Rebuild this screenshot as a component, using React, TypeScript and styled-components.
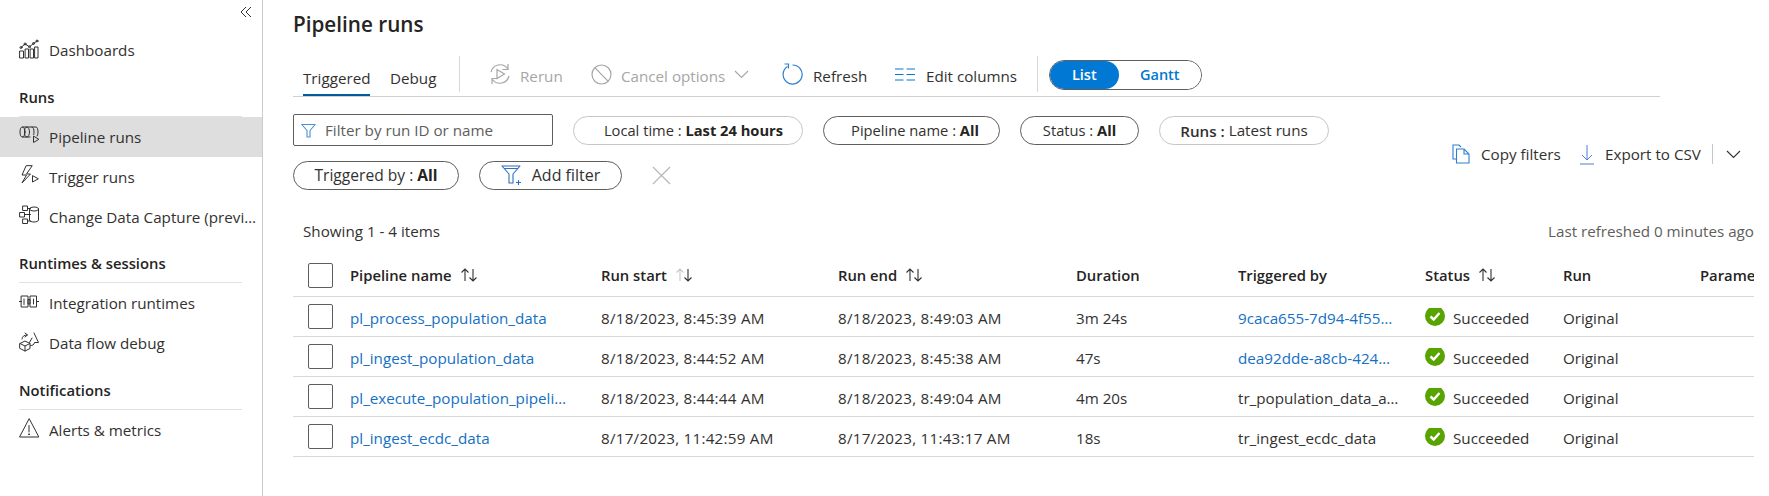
import React from "react";
import styled, { createGlobalStyle } from "styled-components";

const Global = createGlobalStyle`
  html, body { margin: 0; padding: 0; background: #fff; }
  body { font-family: "Open Sans", "Noto Sans", "Liberation Sans", sans-serif; font-size: 15.2px; color: #323130; height: 496px; overflow: hidden; }
`;

const Page = styled.div`
  display: flex;
  width: 1769px;
  height: 496px;
  overflow: hidden;
`;

const Sidebar = styled.nav`
  width: 263px;
  flex: none;
  box-sizing: border-box;
  border-right: 1.5px solid #ccc;
  display: flex;
  flex-direction: column;
`;

const CollapseRow = styled.div`
  height: 30px;
  display: flex;
  justify-content: flex-end;
  align-items: center;
  padding: 0 10px 6px 0;
  box-sizing: border-box;
`;

const NavItem = styled.div<{ $active?: boolean }>`
  height: 40px;
  display: flex;
  align-items: center;
  gap: 10px;
  padding-left: 19px;
  background: ${(p) => (p.$active ? "#dedede" : "transparent")};
  color: #323130;
  white-space: nowrap;
  overflow: hidden;
  svg { flex: none; margin-top: -3px; }
`;

const NavLabel = styled.span`
  overflow: hidden;
  text-overflow: ellipsis;
  padding-right: 2px;
`;

const NavHeading = styled.div`
  height: 46.5px;
  box-sizing: border-box;
  margin: 0 20px 0 19px;
  display: flex;
  align-items: flex-end;
  padding-bottom: 9px;
  border-bottom: 1px solid #e1e1e1;
  font-weight: 600;
  font-size: 14.8px;
  line-height: 20px;
  color: #252423;
`;

const Main = styled.main`
  flex: 1;
  min-width: 0;
  padding: 0 15px 0 30px;
`;

const Title = styled.h1`
  margin: 0;
  height: 50px;
  line-height: 48px;
  font-size: 20.7px;
  font-weight: 600;
  color: #252423;
`;

const Toolbar = styled.div`
  width: 1367px;
  height: 47px;
  box-sizing: border-box;
  border-bottom: 1.5px solid #d2d0ce;
  display: flex;
  align-items: stretch;
  padding-left: 10px;
`;

const Tab = styled.div<{ $active?: boolean; $w: number }>`
  width: ${(p) => p.$w}px;
  flex: none;
  margin-right: 20px;
  height: 46px;
  box-sizing: border-box;
  padding-top: 17px;
  line-height: 22px;
  border-bottom: 2px solid ${(p) => (p.$active ? "#005a9e" : "transparent")};
  white-space: nowrap;
`;

const ToolDivider = styled.div<{ $mr: number }>`
  width: 1px;
  height: 36px;
  margin: 6px ${(p) => p.$mr}px 0 0;
  background: #d8d8d8;
  flex: none;
`;

const ToolButton = styled.div<{ $disabled?: boolean; $w: number; $gap?: number }>`
  width: ${(p) => p.$w}px;
  flex: none;
  display: flex;
  align-items: center;
  gap: ${(p) => p.$gap ?? 9}px;
  height: 32px;
  margin-top: 10px;
  color: ${(p) => (p.$disabled ? "#a6a6a6" : "#323130")};
  white-space: nowrap;
  svg { margin-top: -4px; flex: none; }
`;

const Toggle = styled.div`
  width: 153px;
  height: 30px;
  margin-top: 10px;
  box-sizing: border-box;
  border: 1px solid #605e5c;
  border-radius: 15px;
  display: flex;
  flex: none;
  overflow: hidden;
  font-weight: 600;
  font-size: 14.5px;
`;

const ToggleOption = styled.div<{ $on?: boolean }>`
  width: ${(p) => (p.$on ? "69px" : "83px")};
  display: flex;
  align-items: center;
  justify-content: center;
  border-radius: 15px;
  background: ${(p) => (p.$on ? "#0078d4" : "#fff")};
  color: ${(p) => (p.$on ? "#fff" : "#0078d4")};
  padding-bottom: 1px;
`;

const FilterArea = styled.div`
  display: flex;
  align-items: flex-start;
  height: 122px;
  padding-top: 17px;
  box-sizing: border-box;
`;

const FilterWrap = styled.div`
  width: 1060px;
  display: flex;
  flex-wrap: wrap;
  align-items: center;
  column-gap: 20px;
  row-gap: 15px;
`;

const SearchBox = styled.div`
  width: 260px;
  height: 32px;
  box-sizing: border-box;
  border: 1px solid #605e5c;
  border-radius: 2px;
  display: flex;
  align-items: center;
  gap: 9px;
  padding-left: 7px;
  color: #605e5c;
`;

const Pill = styled.div<{ $w: number; $muted?: boolean; $fs?: number; $pl?: number }>`
  width: ${(p) => p.$w}px;
  height: 29px;
  box-sizing: border-box;
  border: 1px solid ${(p) => (p.$muted ? "#c8c6c4" : "#605e5c")};
  border-radius: 15px;
  display: flex;
  align-items: center;
  justify-content: center;
  gap: 4px;
  white-space: pre;
  padding: 0 0 1px ${(p) => p.$pl ?? 0}px;
  font-size: ${(p) => p.$fs ?? 14.7}px;
  b { font-weight: 700; color: #252423; }
`;

const RunsKey = styled.span`
  font-weight: 600;
  margin-top: 2px;
`;

const AddFilter = styled(Pill)`
  gap: 9px;
`;

const ClearButton = styled.div`
  margin-left: 10px;
  height: 29px;
  display: flex;
  align-items: center;
`;

const SideActions = styled.div`
  margin-left: auto;
  margin-top: 28px;
  display: flex;
  align-items: center;
  height: 24px;
  padding-right: 13px;
  white-space: nowrap;
`;

const SideAction = styled.div<{ $w: number }>`
  width: ${(p) => p.$w}px;
  flex: none;
  display: flex;
  align-items: center;
  gap: 11px;
`;

const SideDivider = styled.div`
  width: 1px;
  height: 20px;
  background: #c8c6c4;
  margin: 0 13px 0 11px;
`;

const ListMeta = styled.div`
  height: 24px;
  display: flex;
  justify-content: space-between;
  align-items: center;
  padding-left: 10px;
`;

const MetaMuted = styled.span`
  color: #605e5c;
`;

const Table = styled.div`
  margin-top: 6px;
  overflow: hidden;
`;

const Row = styled.div<{ $head?: boolean }>`
  display: grid;
  grid-template-columns: 57px 251px 237px 238px 162px 187px 138px 137px 54px;
  height: ${(p) => (p.$head ? "48px" : "40px")};
  padding-top: ${(p) => (p.$head ? "5px" : "2px")};
  box-sizing: border-box;
  border-bottom: 1.5px solid #d8d8d8;
  align-items: center;
  font-weight: ${(p) => (p.$head ? 600 : 400)};
  color: ${(p) => (p.$head ? "#252423" : "#323130")};
  font-size: ${(p) => (p.$head ? "14.8px" : "15.2px")};
`;

const Cell = styled.div`
  min-width: 0;
  white-space: nowrap;
  overflow: hidden;
  text-overflow: ellipsis;
  display: flex;
  align-items: center;
  gap: 8px;
`;

const DateCell = styled(Cell)`
  letter-spacing: 0.25px;
`;

const StatusCell = styled(Cell)`
  svg { margin-top: -4px; flex: none; }
`;

const ClippedCell = styled(Cell)`
  text-overflow: clip;
`;

const Truncated = styled.span<{ $link?: boolean; $w?: number }>`
  display: block;
  overflow: hidden;
  text-overflow: ellipsis;
  max-width: ${(p) => (p.$w ? `${p.$w}px` : "none")};
  color: ${(p) => (p.$link ? "#1570c4" : "inherit")};
`;

const CheckCell = styled.div<{ $body?: boolean }>`
  padding-left: 15px;
  display: flex;
  align-items: center;
  margin-top: ${(p) => (p.$body ? "-2px" : "0")};
`;

const Check = styled.div`
  width: 25px;
  height: 25px;
  box-sizing: border-box;
  border: 1px solid #605e5c;
  border-radius: 2px;
`;

const line = { fill: "none", stroke: "#323130", strokeWidth: 1, strokeLinecap: "round", strokeLinejoin: "round" } as const;

const DashIcon = () => (
  <svg width="20" height="20" viewBox="0 0 20 20" {...line}>
    <rect x="1" y="12" width="3.5" height="7" />
    <rect x="6.5" y="10" width="3" height="9" />
    <rect x="11.5" y="10" width="3" height="9" />
    <rect x="16" y="8" width="3" height="11" />
    <path d="M2 8.500 6 5l4.500 2.800 4-3.300L18 2" />
    <circle cx="2" cy="8.500" r="1" /><circle cx="6" cy="5" r="1" /><circle cx="10.500" cy="7.800" r="1" /><circle cx="14.500" cy="4.500" r="1" /><circle cx="18" cy="2" r="1" />
  </svg>
);
const PipeIcon = () => (
  <svg width="20" height="20" viewBox="0 0 20 20" {...line}>
    <ellipse cx="3.500" cy="7" rx="2.500" ry="5" />
    <ellipse cx="8" cy="7" rx="2.500" ry="5" />
    <path d="M3.500 2H17c1.200 0 2 2.200 2 5 0 1.600-.3 3-.8 4M3.500 12H11" />
    <path d="M13 2c1.200 0 2 2.200 2 5 0 1-.1 1.800-.3 2.600" />
    <path d="M14.500 11.500v6l5-3z" />
  </svg>
);
const TriggerIcon = () => (
  <svg width="20" height="20" viewBox="0 0 20 20" {...line}>
    <path d="M7 1 3 10h4.500L3 18l8.500-9H7.500L13 1z" />
    <path d="M13.500 11v6l5.500-3z" />
  </svg>
);
const CdcIcon = () => (
  <svg width="20" height="20" viewBox="0 0 20 20" {...line}>
    <rect x="4" y="1" width="4.500" height="4.500" />
    <rect x="1" y="7.500" width="4.500" height="4.500" />
    <rect x="4" y="14" width="4.500" height="4.500" />
    <path d="M8.500 3.500h3M5.500 9.500h6M8.500 16h3" />
    <ellipse cx="15" cy="4" rx="4.500" ry="2" />
    <path d="M10.500 4v11c0 1.200 2 2 4.500 2s4.500-.8 4.500-2V4" />
  </svg>
);
const RuntimeIcon = () => (
  <svg width="20" height="20" viewBox="0 0 20 20" {...line}>
    <path d="M0 9.500h2.500M17.500 9.500H20" />
    <path d="M2.500 4h6.500v8h2V4H17.500v11h-6.500V7.500H9v7.500H2.500z" />
    <path d="M5 7v5.500M14.500 7v5" />
  </svg>
);
const FlowIcon = () => (
  <svg width="20" height="20" viewBox="0 0 20 20" {...line}>
    <path d="M1 11.500 6 9l5 2.500v5L6 19l-5-2.500zM1 11.500 6 14l5-2.500M6 14v5" />
    <path d="M3 7c0-2.500 2-4 5-4M6 1l2.500 2L6 5" />
    <path d="M15 1l4.500 9.500h-4c-.5 2.500-2 3-4 3M13 6l-2.500 4.500" />
  </svg>
);
const AlertIcon = () => (
  <svg width="20" height="20" viewBox="0 0 20 20" {...line}>
    <path d="M10 1 .500 19h19z" />
    <path d="M10 7.500v6.500" />
    <circle cx="10" cy="16.300" r=".5" fill="#323130" />
  </svg>
);
const Chevrons = () => (
  <svg width="12" height="12" viewBox="0 0 12 12" fill="none" stroke="#323130" strokeWidth="1">
    <path d="M6 1 1 6l5 5M11 1 6 6l5 5" />
  </svg>
);
const RerunIcon = () => (
  <svg width="22" height="22" viewBox="0 0 22 22" fill="none" stroke="#a6a6a6" strokeWidth="1.200">
    <path d="M2 9A9.300 9.300 0 0 1 18.500 5.500M19 1v5.500h-5.500" />
    <path d="M20 13A9.300 9.300 0 0 1 3.500 16.500M3 21v-5.500h5.500" />
    <path d="M8 6.500v9l7.500-4.500z" />
  </svg>
);
const CancelIcon = () => (
  <svg width="21" height="21" viewBox="0 0 21 21" fill="none" stroke="#a6a6a6" strokeWidth="1.200">
    <circle cx="10.500" cy="10.500" r="9.500" />
    <path d="M4 3.800 17 17.200" />
  </svg>
);
const ChevronDown = ({ color = "#323130" }: { color?: string }) => (
  <svg width="15" height="9" viewBox="0 0 15 9" fill="none" stroke={color} strokeWidth="1.100">
    <path d="M1 1l6.500 6.500L14 1" />
  </svg>
);
const RefreshIcon = () => (
  <svg width="21" height="22" viewBox="0 0 21 22" fill="none" stroke="#2f7fd0" strokeWidth="1.200">
    <path d="M5.500 3.500a9.500 9.500 0 1 0 5-1.500" />
    <path d="M2.500 1h4v4.500" />
  </svg>
);
const ColumnsIcon = () => (
  <svg width="20" height="13" viewBox="0 0 20 13" fill="none" stroke="#0078d4" strokeWidth="1">
    <path d="M0 1h8.500M11.500 1H20M0 6.500h8.500M11.500 6.500H20M0 12h8.500M11.500 12H20" />
  </svg>
);
const FunnelIcon = () => (
  <svg width="15" height="15" viewBox="0 0 15 15" fill="none" stroke="#4a8ed6" strokeWidth="1.100" strokeLinejoin="round">
    <path d="M.8 1.500h13.400L9 7.500v6.500H6V7.500z" />
  </svg>
);
const AddFunnelIcon = () => (
  <svg width="22" height="22" viewBox="0 0 22 22" fill="none" stroke="#2f6fc4" strokeWidth="1.100" strokeLinejoin="round">
    <path d="M1 2h18l-7 8v9H8v-9zM3.500 4.500h13" />
    <path d="M15 18.500h5M17.500 16v5" />
  </svg>
);
const XIcon = () => (
  <svg width="19" height="19" viewBox="0 0 20 20" fill="none" stroke="#b8b8b8" strokeWidth="1.300">
    <path d="M1 1l18 18M19 1 1 19" />
  </svg>
);
const CopyIcon = () => (
  <svg width="18" height="20" viewBox="0 0 18 20" fill="none" stroke="#2f7fd0" strokeWidth="1.100">
    <path d="M4 15H1V1h6l2 2" />
    <path d="M4.500 5H12l5 5v9H4.500zM12 5v5h5" />
  </svg>
);
const ExportIcon = () => (
  <svg width="14" height="21" viewBox="0 0 14 21" fill="none" stroke="#4a7fd0" strokeWidth="1">
    <path d="M7 1v15M2 11l5 5 5-5M0 20h14" />
  </svg>
);
const Sort = ({ faded }: { faded?: boolean }) => (
  <svg width="18" height="14" viewBox="0 0 18 14" fill="none" strokeWidth="1.100">
    <path d="M5 13V1M1.500 4.500 5 1l3.500 3.500" stroke={faded ? "#c8c6c4" : "#323130"} />
    <path d="M13 1v12M9.500 9.500 13 13l3.500-3.500" stroke="#323130" />
  </svg>
);
const Success = () => (
  <svg width="20" height="20" viewBox="0 0 20 20">
    <circle cx="10" cy="10" r="10" fill="#57a300" />
    <path d="M5.500 10.500 8.700 13.500 14.500 7" fill="none" stroke="#fff" strokeWidth="2.400" />
  </svg>
);

type Run = { name: string; start: string; end: string; dur: string; trig: string; link: boolean };
const runs: Run[] = [
  { name: "pl_process_population_data", start: "8/18/2023, 8:45:39 AM", end: "8/18/2023, 8:49:03 AM", dur: "3m 24s", trig: "9caca655-7d94-4f55-8c5e-1a2b", link: true },
  { name: "pl_ingest_population_data", start: "8/18/2023, 8:44:52 AM", end: "8/18/2023, 8:45:38 AM", dur: "47s", trig: "dea92dde-a8cb-4242-9d1c-3f4a", link: true },
  { name: "pl_execute_population_pipeline", start: "8/18/2023, 8:44:44 AM", end: "8/18/2023, 8:49:04 AM", dur: "4m 20s", trig: "tr_population_data_arrived", link: false },
  { name: "pl_ingest_ecdc_data", start: "8/17/2023, 11:42:59 AM", end: "8/17/2023, 11:43:17 AM", dur: "18s", trig: "tr_ingest_ecdc_data", link: false },
];

export default function App() {
  return (
    <Page>
      <Global />
      <Sidebar>
        <CollapseRow><Chevrons /></CollapseRow>
        <NavItem><DashIcon /><NavLabel>Dashboards</NavLabel></NavItem>
        <NavHeading>Runs</NavHeading>
        <NavItem $active><PipeIcon /><NavLabel>Pipeline runs</NavLabel></NavItem>
        <NavItem><TriggerIcon /><NavLabel>Trigger runs</NavLabel></NavItem>
        <NavItem><CdcIcon /><NavLabel>Change Data Capture (preview)</NavLabel></NavItem>
        <NavHeading>Runtimes &amp; sessions</NavHeading>
        <NavItem><RuntimeIcon /><NavLabel>Integration runtimes</NavLabel></NavItem>
        <NavItem><FlowIcon /><NavLabel>Data flow debug</NavLabel></NavItem>
        <NavHeading>Notifications</NavHeading>
        <NavItem><AlertIcon /><NavLabel>Alerts &amp; metrics</NavLabel></NavItem>
      </Sidebar>
      <Main>
        <Title>Pipeline runs</Title>
        <Toolbar>
          <Tab $active $w={67}>Triggered</Tab>
          <Tab $w={49}>Debug</Tab>
          <ToolDivider $mr={29} />
          <ToolButton $disabled $w={102}><RerunIcon />Rerun</ToolButton>
          <ToolButton $disabled $w={191}><CancelIcon />Cancel options <ChevronDown color="#a6a6a6" /></ToolButton>
          <ToolButton $w={113} $gap={10}><RefreshIcon />Refresh</ToolButton>
          <ToolButton $w={142} $gap={11}><ColumnsIcon />Edit columns</ToolButton>
          <ToolDivider $mr={11} />
          <Toggle><ToggleOption $on>List</ToggleOption><ToggleOption>Gantt</ToggleOption></Toggle>
        </Toolbar>
        <FilterArea>
          <FilterWrap>
            <SearchBox><FunnelIcon />Filter by run ID or name</SearchBox>
            <Pill $w={230} $muted $pl={11}><span>Local time : <b>Last 24 hours</b></span></Pill>
            <Pill $w={177} $pl={7}><span>Pipeline name : <b>All</b></span></Pill>
            <Pill $w={119}><span>Status : <b>All</b></span></Pill>
            <Pill $w={170} $muted $fs={15.2}><RunsKey>Runs :</RunsKey><span>Latest runs</span></Pill>
            <Pill $w={166} $fs={15.6}><span>Triggered by : <b>All</b></span></Pill>
            <AddFilter $w={143} $fs={16}><AddFunnelIcon />Add filter</AddFilter>
            <ClearButton><XIcon /></ClearButton>
          </FilterWrap>
          <SideActions>
            <SideAction $w={128}><CopyIcon />Copy filters</SideAction>
            <SideAction $w={121}><ExportIcon />Export to CSV</SideAction>
            <SideDivider />
            <ChevronDown />
          </SideActions>
        </FilterArea>
        <ListMeta>
          <span>Showing 1 - 4 items</span>
          <MetaMuted>Last refreshed 0 minutes ago</MetaMuted>
        </ListMeta>
        <Table>
          <Row $head>
            <CheckCell><Check /></CheckCell>
            <Cell>Pipeline name <Sort /></Cell>
            <Cell>Run start <Sort faded /></Cell>
            <Cell>Run end <Sort /></Cell>
            <Cell>Duration</Cell>
            <Cell>Triggered by</Cell>
            <Cell>Status <Sort /></Cell>
            <Cell>Run</Cell>
            <ClippedCell>Parameters</ClippedCell>
          </Row>
          {runs.map((r) => (
            <Row key={r.name}>
              <CheckCell $body><Check /></CheckCell>
              <Cell><Truncated $link $w={222}>{r.name}</Truncated></Cell>
              <DateCell>{r.start}</DateCell>
              <DateCell>{r.end}</DateCell>
              <Cell>{r.dur}</Cell>
              <Cell><Truncated $link={r.link} $w={r.link ? 157 : 163}>{r.trig}</Truncated></Cell>
              <StatusCell><Success />Succeeded</StatusCell>
              <Cell>Original</Cell>
              <Cell />
            </Row>
          ))}
        </Table>
      </Main>
    </Page>
  );
}
